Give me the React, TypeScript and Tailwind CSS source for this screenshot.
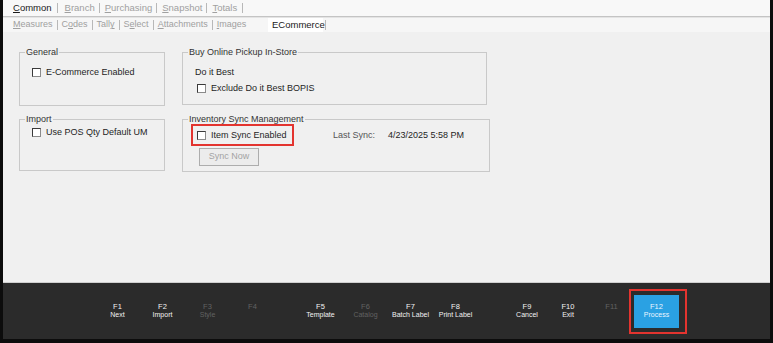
import React from "react";

const font = { fontFamily: '"Liberation Sans", Arial, sans-serif' };

function Sep({ l = 4, r = 5 }: { l?: number; r?: number }) {
  return (
    <span
      className="w-px h-[10px] bg-[#b8b8b8] shrink-0"
      style={{ marginLeft: l, marginRight: r }}
    />
  );
}

function Check({ label }: { label: string }) {
  return (
    <div className="flex items-center h-[11px]">
      <span className="w-[9px] h-[9px] bg-white border-t border-l border-t-[#3a3a3a] border-l-[#3a3a3a] border-r border-b border-r-[#8a8a8a] border-b-[#8a8a8a] shrink-0" />
      <span className="ml-[5px] text-[9px] leading-[11px] text-[#1e1e1e] whitespace-nowrap">{label}</span>
    </div>
  );
}

function Group({
  title,
  className,
  children,
}: {
  title: string;
  className: string;
  children?: React.ReactNode;
}) {
  return (
    <fieldset className={`border border-[#c9c9c9] m-0 p-0 ${className}`}>
      <legend className="ml-[5px] px-[1px] text-[9px] leading-[11px] text-[#333]">{title}</legend>
      {children}
    </fieldset>
  );
}

function FKey({
  k,
  name,
  w,
  on,
}: {
  k: string;
  name?: string;
  w: string;
  on: boolean;
}) {
  return (
    <div className={`${w} flex flex-col items-center shrink-0 ${on ? "text-[#f2f2f2]" : "text-[#626262]"}`}>
      <span className="text-[7.5px] leading-[8px]">{k}</span>
      <span className="text-[7px] leading-[8px] whitespace-nowrap">{name ?? "\u00a0"}</span>
    </div>
  );
}

export default function App() {
  return (
    <div className="w-[773px] h-[343px] bg-[#0c0c0c] pl-[3px] pr-[3px] pb-[4px] flex flex-col" style={font}>
      {/* tab row 1 */}
      <div className="h-[16px] bg-[#f8f8f8] flex items-center pl-[10px] text-[9.5px] text-[#a0a0a0] shrink-0 whitespace-nowrap">
        <span className="text-[#1a1a1a]"><u>C</u>ommon</span>
        <Sep l={5} r={7} />
        <span><u>B</u>ranch</span>
        <Sep l={4} r={5} />
        <span><u>P</u>urchasing</span>
        <Sep l={4} r={5} />
        <span><u>S</u>napshot</span>
        <Sep l={4} r={5} />
        <span><u>T</u>otals</span>
        <Sep l={5} r={0} />
      </div>
      <div className="h-px bg-[#c4c4c4] shrink-0" />
      <div className="h-px bg-[#e4e4e4] shrink-0" />
      {/* tab row 2 */}
      <div className="h-[14px] bg-[#f6f6f6] flex items-center pl-[10px] text-[9px] text-[#a0a0a0] shrink-0 whitespace-nowrap">
        <div className="w-[255px] flex items-center shrink-0">
          <span><u>M</u>easures</span>
          <Sep l={4} r={4} />
          <span>C<u>o</u>des</span>
          <Sep l={4} r={4} />
          <span>Tall<u>y</u></span>
          <Sep l={4} r={4} />
          <span>S<u>e</u>lect</span>
          <Sep l={4} r={4} />
          <span><u>A</u>ttachments</span>
          <Sep l={4} r={4} />
          <span><u>I</u>mages</span>
        </div>
        <span className="w-[55px] h-full bg-white flex items-center pl-[4px] text-[#1a1a1a] text-[9.5px] shrink-0">ECommerce</span>
        <Sep l={2} r={0} />
      </div>
      {/* content */}
      <div className="flex-1 bg-[#f0f0f0] pl-[16px] pt-[15px]">
        <div className="grid grid-cols-[146px_309px] gap-x-[17px] gap-y-[8px] items-start">
          <Group title="General" className="w-[146px] h-[59px]">
            <div className="pl-[12px] pt-[9px]">
              <Check label="E-Commerce Enabled" />
            </div>
          </Group>
          <Group title="Buy Online Pickup In-Store" className="w-[305px] h-[58px]">
            <div className="pl-[12px] pt-[9px] flex flex-col">
              <span className="text-[9px] leading-[11px] text-[#1e1e1e]">Do it Best</span>
              <div className="pl-[2px] pt-[5px]">
                <Check label="Exclude Do it Best BOPIS" />
              </div>
            </div>
          </Group>
          <Group title="Import" className="w-[146px] h-[57px]">
            <div className="pl-[12px] pt-[2px]">
              <Check label="Use POS Qty Default UM" />
            </div>
          </Group>
          <Group title="Inventory Sync Management" className="w-[308px] h-[58px]">
            <div className="pl-[14px] pt-[5px] flex flex-col">
              <div className="flex items-center h-[11px]">
                <div className="relative w-[136px]">
                  <Check label="Item Sync Enabled" />
                  <div className="absolute left-[-6px] top-[-6px] w-[103px] h-[22px] border-2 border-[#e3342f]" />
                </div>
                <span className="text-[9px] leading-[11px] text-[#555]">Last Sync:</span>
                <span className="ml-[13px] text-[9px] leading-[11px] text-[#1e1e1e]">4/23/2025 5:58 PM</span>
              </div>
              <div className="pl-[2px] pt-[7px]">
                <div className="w-[60px] h-[18px] border border-[#adadad] bg-[#ececec] flex items-center justify-center text-[9px] text-[#a3a3a3]">
                  Sync Now
                </div>
              </div>
            </div>
          </Group>
        </div>
      </div>
      <div className="h-px bg-[#cfcfcf] shrink-0" />
      {/* function key bar */}
      <div className="h-[56px] bg-[#2b2b2b] flex items-center pl-[92px] shrink-0">
        <FKey k="F1" name="Next" w="w-[45px]" on />
        <FKey k="F2" name="Import" w="w-[45px]" on />
        <FKey k="F3" name="Style" w="w-[45px]" on={false} />
        <FKey k="F4" w="w-[45px]" on={false} />
        <div className="w-[23px] shrink-0" />
        <FKey k="F5" name="Template" w="w-[45px]" on />
        <FKey k="F6" name="Catalog" w="w-[45px]" on={false} />
        <FKey k="F7" name="Batch Label" w="w-[45px]" on />
        <FKey k="F8" name="Print Label" w="w-[45px]" on />
        <div className="w-[29px] shrink-0" />
        <FKey k="F9" name="Cancel" w="w-[40px]" on />
        <FKey k="F10" name="Exit" w="w-[42px]" on />
        <FKey k="F11" w="w-[45px]" on={false} />
        <div className="relative w-[45px] h-[33px] bg-[#2aa1e3] flex flex-col items-center justify-center text-[#eaf5ff] shrink-0">
          <span className="text-[7.5px] leading-[8px]">F12</span>
          <span className="text-[7px] leading-[8px]">Process</span>
          <div className="absolute left-[-5px] right-[-8px] top-[-6px] bottom-[-6px] border-2 border-[#e3342f]" />
        </div>
      </div>
    </div>
  );
}
